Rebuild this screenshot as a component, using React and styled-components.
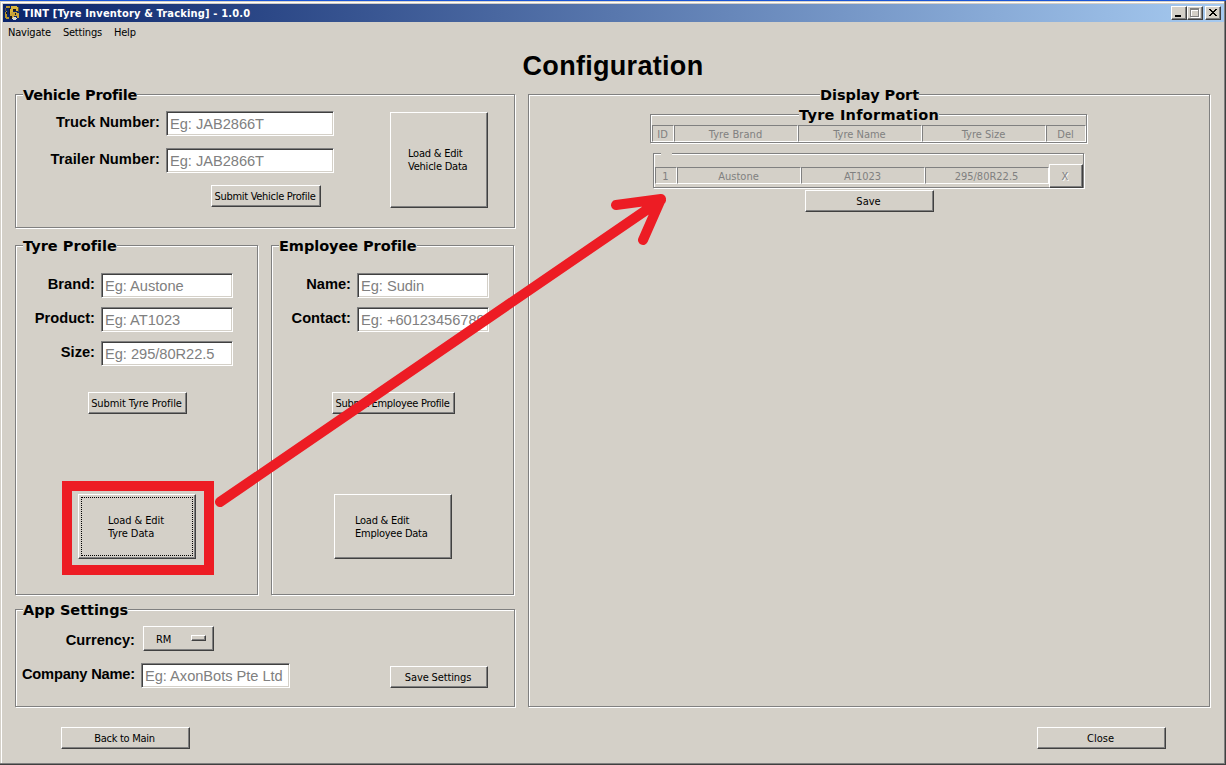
import React from "react";
import styled, { createGlobalStyle, css } from "styled-components";

const face = "#d4d0c8";
const shadow = "#808080";
const dark = "#404040";
const red = "#ed1c24";
const uiFont = '"DejaVu Sans Condensed", "DejaVu Sans", sans-serif';
const formFont = '"Liberation Sans", Arial, sans-serif';

const GlobalStyle = createGlobalStyle`
  * { box-sizing: border-box; }
  body { margin: 0; overflow: hidden; background: ${face}; }
`;

const raised = css`
  border: 1px solid;
  border-color: #fff ${dark} ${dark} #fff;
  box-shadow: inset -1px -1px 0 ${shadow};
`;

const etched = css`
  border: 1px solid ${shadow};
  box-shadow: 1px 1px 0 #fff, inset 1px 1px 0 #fff;
`;

const Window = styled.div`
  position: relative;
  display: flex;
  flex-direction: column;
  width: 1226px;
  height: 765px;
  padding: 3px 2px 2px 3px;
  background: ${face};
  border-top: 1px solid #1a56d6;
  box-shadow: inset -1px -1px 0 ${dark}, inset -2px -2px 0 ${shadow},
    inset 1px 1px 0 ${face}, inset 2px 2px 0 #fff;
  font: 11px/13px ${uiFont};
  color: #000;
`;

const TitleBar = styled.header`
  display: flex;
  align-items: center;
  height: 18px;
  padding: 0 3px 0 1px;
  background: linear-gradient(90deg, #0a246a, #a6caf0);
`;

const AppIcon = styled.svg`
  width: 16px;
  height: 16px;
  margin-right: 3px;
`;

const WindowTitle = styled.span`
  flex: 1;
  color: #fff;
  font-weight: bold;
  letter-spacing: 0.17px;
`;

const CaptionButton = styled.button`
  ${raised}
  width: 16px;
  height: 14px;
  padding: 0;
  background: ${face};
  margin-left: ${(p) => (p.$apart ? "2px" : "0")};
  svg { display: block; }
`;

const MenuBar = styled.nav`
  display: flex;
  align-items: center;
  gap: 12px;
  height: 20px;
  padding-left: 5px;
  letter-spacing: -0.19px;
`;

const Heading = styled.h1`
  display: flex;
  align-items: center;
  justify-content: center;
  height: 52px;
  margin: 0;
  padding: 0 1px 4px 0;
  font: bold 27px/30px ${formFont};
  letter-spacing: 0.3px;
`;

const Main = styled.main`
  display: flex;
  gap: 13px;
  height: 613px;
  padding-left: 12px;
`;

const LeftColumn = styled.div`
  display: flex;
  flex-direction: column;
  width: 500px;
`;

const ProfileRow = styled.div`
  display: flex;
  gap: 13px;
  margin: 17px 0 14px;
`;

const Group = styled.section`
  ${etched}
  position: relative;
  display: flex;
  flex-direction: ${(p) => (p.$row ? "row" : "column")};
  width: ${(p) => p.$w}px;
  height: ${(p) => p.$h}px;
  padding-top: ${(p) => p.$top || 0}px;
`;

const Legend = styled.h2`
  position: absolute;
  top: -10px;
  left: ${(p) => (p.$x === undefined ? 7 : p.$x)}px;
  margin: 0;
  background: ${face};
  font: bold 14.5px/20px "DejaVu Sans", sans-serif;
  letter-spacing: ${(p) => p.$tracking || 0}px;
  white-space: nowrap;
  height: 20px;
`;

const Fields = styled.div`
  display: flex;
  flex-direction: column;
  gap: ${(p) => p.$gap}px;
`;

const Field = styled.label`
  display: flex;
  gap: ${(p) => p.$gap || 6}px;
`;

const FieldName = styled.span`
  display: flex;
  justify-content: flex-end;
  width: ${(p) => p.$w}px;
  height: 25px;
  padding-top: ${(p) => p.$drop || 1}px;
  white-space: nowrap;
  font: bold 14.67px/20px ${formFont};
  letter-spacing: ${(p) => p.$tracking || 0}px;
`;

const Entry = styled.input`
  width: ${(p) => p.$w}px;
  height: 25px;
  padding: 1px 2px 0;
  border: 1px solid;
  border-color: ${shadow} #fff #fff ${shadow};
  border-radius: 0;
  box-shadow: inset 1px 1px 0 ${dark}, inset -1px -1px 0 ${face};
  background: #fff;
  text-indent: 1px;
  font: 14.67px/20px ${formFont};
  letter-spacing: -0.04px;
  outline: none;
  &::placeholder { color: ${shadow}; opacity: 1; }
`;

const Button = styled.button`
  ${raised}
  position: relative;
  flex: none;
  display: flex;
  align-items: center;
  justify-content: center;
  width: ${(p) => p.$w}px;
  height: ${(p) => p.$h || 22}px;
  margin: ${(p) => p.$m || "0"};
  padding: 0 2px 0 0;
  background: ${face};
  font: 11px/13px ${uiFont};
  letter-spacing: ${(p) => p.$tracking || 0}px;
  color: #000;
  text-align: left;
  white-space: pre;
`;

const LoadButton = styled(Button)`
  justify-content: flex-start;
  padding: ${(p) => p.$drop || 0}px 0 0 ${(p) => p.$indent}px;
`;

const FocusRing = styled.span`
  position: absolute;
  inset: 2px;
  border: 1px dotted #000;
`;

const Highlight = styled.div`
  width: 152px;
  height: 94px;
  margin: 67px 0 0 46px;
  padding: 3px 6px;
  border: 10px solid ${red};
`;

const OptionMenu = styled(Button)`
  justify-content: space-between;
  padding: 2px 7px 0 12px;
`;

const OptionMark = styled.i`
  ${raised}
  width: 15px;
  height: 6px;
  margin-bottom: 3px;
`;

const Table = styled.div`
  ${etched}
  position: relative;
  display: flex;
  align-items: flex-start;
  width: ${(p) => p.$w}px;
  height: ${(p) => p.$h}px;
  margin: ${(p) => p.$m};
  padding: ${(p) => p.$top}px 0 0 1px;
`;

const Cell = styled.span`
  width: ${(p) => p.$w}px;
  height: 17px;
  border: 1px solid;
  border-color: ${shadow} #fff #fff ${shadow};
  padding: 2px 1px 0 0;
  text-align: center;
  color: ${shadow};
  letter-spacing: ${(p) => p.$tracking || 0}px;
`;

const EmptyLegend = styled.span`
  position: absolute;
  top: -1px;
  left: 7px;
  width: 11px;
  height: 2px;
  background: ${face};
`;

const DeleteButton = styled(Button)`
  margin-top: -3px;
  color: ${shadow};
  text-shadow: 1px 1px 0 #fff;
`;

const Footer = styled.footer`
  display: flex;
  justify-content: space-between;
  padding: 20px 58px 0;
`;

const Arrow = styled.svg`
  position: absolute;
  top: -1px;
  left: 0;
  pointer-events: none;
`;

function Truck() {
  return (
    <AppIcon viewBox="0 0 16 16" shapeRendering="crispEdges">
      <path d="M2 1h4v2H2v3h1v2H3v4h2v2H2v-1H1V7h1z" fill="#b8962c" />
      <path d="M7 1h6v1h1v4h-2V4H9v3H8v3H6V4h1z" fill="#d9b43c" />
      <path d="M7 7h6v1h2v5h-2v-2h-3v2H8v-2H6V9h1z" fill="#c9a236" />
      <path d="M5 3h1v6H5zM9 4h3v2H9zM11 8h1v2h-1zM6 11h2v3H6zM2 7h1v2H2z" fill="#1b1a20" />
      <path d="M9 12h3v1h1v1h-1v1H9v-1H8v-1h1z" fill="#d8d8d0" />
      <path d="M14 2h1v5h-1zM1 3h1v3H1z" fill="#5e5130" />
    </AppIcon>
  );
}

function FieldRow({ name, nameWidth, width, placeholder, tracking }) {
  return (
    <Field>
      <FieldName $w={nameWidth} $tracking={tracking}>{name}</FieldName>
      <Entry $w={width} placeholder={placeholder} />
    </Field>
  );
}

export default function App() {
  return (
    <>
      <GlobalStyle />
      <Window>
        <TitleBar>
          <Truck />
          <WindowTitle>TINT [Tyre Inventory &amp; Tracking] - 1.0.0</WindowTitle>
          <CaptionButton aria-label="Minimize">
            <svg width="14" height="12"><path d="M3 8h6v2H3z" /></svg>
          </CaptionButton>
          <CaptionButton aria-label="Maximize">
            <svg width="14" height="12" shapeRendering="crispEdges">
              <path d="M3 2h9v9H3z" fill="#fff" />
              <path d="M2 1h9v9H2z" fill={shadow} />
              <path d="M3 3h7v6H3z" fill="#fff" />
              <path d="M4 4h6v5H4z" fill={face} />
            </svg>
          </CaptionButton>
          <CaptionButton $apart aria-label="Close window">
            <svg width="14" height="12" shapeRendering="crispEdges">
              <path d="M3 2h2v1h1v1h2V3h1V2h2v1h-1v1H9v1H8v1h1v1h1v1h1v1H9V8H8V7H6v1H5v1H3V8h1V7h1V6h1V5H5V4H4V3H3z" />
            </svg>
          </CaptionButton>
        </TitleBar>
        <MenuBar>
          <span>Navigate</span>
          <span>Settings</span>
          <span>Help</span>
        </MenuBar>
        <Heading>Configuration</Heading>
        <Main>
          <LeftColumn>
            <Group $row $w={500} $h={134} $top={16}>
              <Legend $tracking={-0.25}>Vehicle Profile</Legend>
              <Fields $gap={12}>
                <FieldRow name="Truck Number:" nameWidth={144} width={168} placeholder="Eg: JAB2866T" tracking={0.04} />
                <FieldRow name="Trailer Number:" nameWidth={144} width={168} placeholder="Eg: JAB2866T" tracking={0.08} />
                <Button $w={110} $m="0 0 0 195px" $tracking={-0.29}>Submit Vehicle Profile</Button>
              </Fields>
              <LoadButton $w={98} $h={96} $m="1px 0 0 56px" $indent={17} $tracking={-0.22}>
                {"Load & Edit\nVehicle Data"}
              </LoadButton>
            </Group>
            <ProfileRow>
              <Group $w={243} $h={350} $top={27}>
                <Legend $tracking={0.03}>Tyre Profile</Legend>
                <Fields $gap={9}>
                  <FieldRow name="Brand:" nameWidth={79} width={132} placeholder="Eg: Austone" />
                  <FieldRow name="Product:" nameWidth={79} width={132} placeholder="Eg: AT1023" />
                  <FieldRow name="Size:" nameWidth={79} width={132} placeholder="Eg: 295/80R22.5" />
                </Fields>
                <Button $w={99} $m="26px 0 0 72px" $tracking={-0.08}>Submit Tyre Profile</Button>
                <Highlight>
                  <LoadButton $w={118} $h={65} $indent={29} $drop={1} $tracking={-0.08}>
                    <FocusRing />
                    {"Load & Edit\nTyre Data"}
                  </LoadButton>
                </Highlight>
              </Group>
              <Group $w={243} $h={350} $top={27}>
                <Legend $tracking={-0.05}>Employee Profile</Legend>
                <Fields $gap={9}>
                  <FieldRow name="Name:" nameWidth={79} width={132} placeholder="Eg: Sudin" />
                  <FieldRow name="Contact:" nameWidth={79} width={132} placeholder="Eg: +60123456789" />
                </Fields>
                <Button $w={123} $m="60px 0 0 60px" $tracking={-0.31}>Submit Employee Profile</Button>
                <LoadButton $w={118} $h={65} $m="80px 0 0 62px" $indent={20} $drop={1} $tracking={-0.25}>
                  {"Load & Edit\nEmployee Data"}
                </LoadButton>
              </Group>
            </ProfileRow>
            <Group $row $w={500} $h={98} $top={16}>
              <Legend $tracking={-0.03}>App Settings</Legend>
              <Fields $gap={12}>
                <Field $gap={8}>
                  <FieldName $w={119} $drop={4}>Currency:</FieldName>
                  <OptionMenu $w={71} $h={25} $tracking={-0.1}>RM<OptionMark /></OptionMenu>
                </Field>
                <FieldRow name="Company Name:" nameWidth={119} width={149} placeholder="Eg: AxonBots Pte Ltd" tracking={-0.2} />
              </Fields>
              <Button $w={98} $m="40px 0 0 100px" $tracking={-0.13}>Save Settings</Button>
            </Group>
          </LeftColumn>
          <Group $w={682} $h={613}>
            <Legend $x={291} $tracking={-0.03}>Display Port</Legend>
            <Table $w={437} $h={29} $top={10} $m="19px 0 0 121px">
              <Legend $x={148} $tracking={0.26}>Tyre Information</Legend>
              <Cell $w={22}>ID</Cell>
              <Cell $w={124} $tracking={0.08}>Tyre Brand</Cell>
              <Cell $w={124}>Tyre Name</Cell>
              <Cell $w={124}>Tyre Size</Cell>
              <Cell $w={40}>Del</Cell>
            </Table>
            <Table $w={431} $h={35} $top={13} $m="10px 0 0 124px">
              <EmptyLegend />
              <Cell $w={22}>1</Cell>
              <Cell $w={124}>Austone</Cell>
              <Cell $w={124}>AT1023</Cell>
              <Cell $w={124}>295/80R22.5</Cell>
              <DeleteButton $w={34} $h={24}>X</DeleteButton>
            </Table>
            <Button $w={129} $m="2px 0 0 276px">Save</Button>
          </Group>
        </Main>
        <Footer>
          <Button $w={129} $tracking={-0.3}>Back to Main</Button>
          <Button $w={129}>Close</Button>
        </Footer>
        <Arrow width="1226" height="765" fill="none" stroke={red} strokeWidth="10" strokeLinecap="round" strokeLinejoin="round">
          <path d="M220 502L661 200M616 205L661 199L643 240" />
        </Arrow>
      </Window>
    </>
  );
}
